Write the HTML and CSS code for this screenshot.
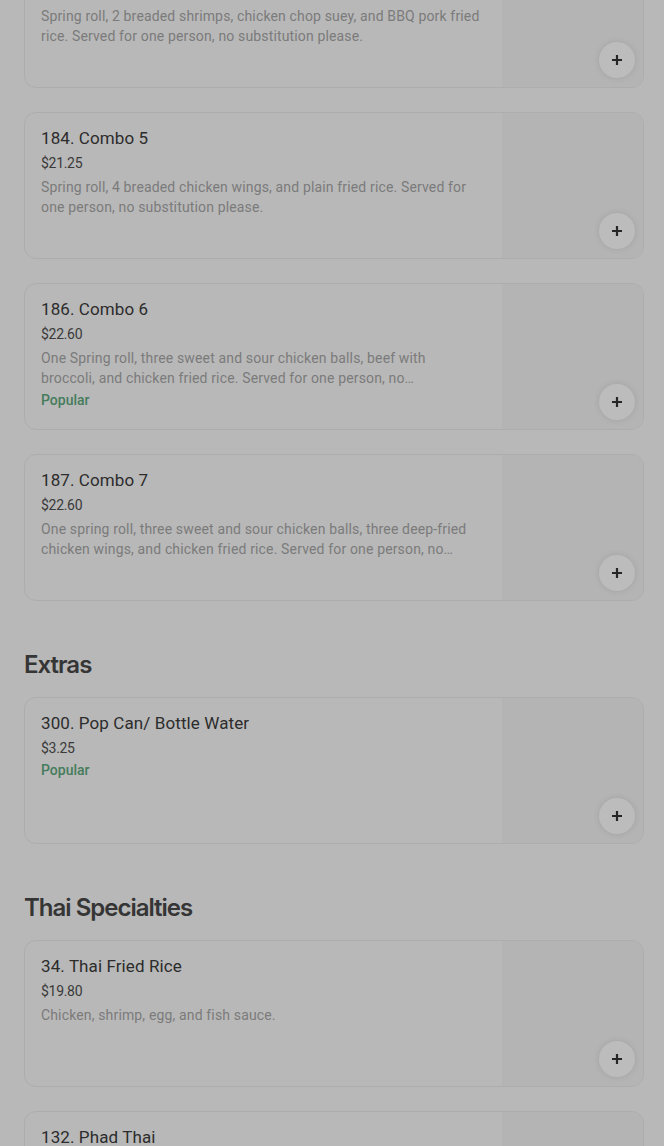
FILE: index.html
```html
<!DOCTYPE html>
<html lang="en">
<head>
  <meta charset="UTF-8" />
  <meta name="viewport" content="width=device-width, initial-scale=1.0"/>
  <title>Menu</title>
  <link rel="stylesheet" href="styles.css">
</head>
<body>

<div class="menu">

  <div class="section">
    <div class="item-list">
      <div class="item">
        <div class="item-info">
          <div class="item-title">182. Combo 4</div>
          <div class="item-price">$21.25</div>
          <div class="item-desc">Spring roll, 2 breaded shrimps, chicken chop suey, and BBQ pork fried rice. Served for one person, no substitution please.</div>
        </div>
        <div class="item-photo"><button class="add-btn"><svg viewBox="0 0 12 12"><path d="M6 1v10M1 6h10"/></svg></button></div>
      </div>

      <div class="item">
        <div class="item-info">
          <div class="item-title">184. Combo 5</div>
          <div class="item-price">$21.25</div>
          <div class="item-desc">Spring roll, 4 breaded chicken wings, and plain fried rice. Served for one person, no substitution please.</div>
        </div>
        <div class="item-photo"><button class="add-btn"><svg viewBox="0 0 12 12"><path d="M6 1v10M1 6h10"/></svg></button></div>
      </div>

      <div class="item">
        <div class="item-info">
          <div class="item-title">186. Combo 6</div>
          <div class="item-price">$22.60</div>
          <div class="item-desc">One Spring roll, three sweet and sour chicken balls, beef with broccoli, and chicken fried rice. Served for one person, no substitution please.</div>
          <div class="item-tag">Popular</div>
        </div>
        <div class="item-photo"><button class="add-btn"><svg viewBox="0 0 12 12"><path d="M6 1v10M1 6h10"/></svg></button></div>
      </div>

      <div class="item">
        <div class="item-info">
          <div class="item-title">187. Combo 7</div>
          <div class="item-price">$22.60</div>
          <div class="item-desc">One spring roll, three sweet and sour chicken balls, three deep-fried chicken wings, and chicken fried rice. Served for one person, no substitution please.</div>
        </div>
        <div class="item-photo"><button class="add-btn"><svg viewBox="0 0 12 12"><path d="M6 1v10M1 6h10"/></svg></button></div>
      </div>
    </div>
  </div>

  <div class="section">
    <h2 class="section-title">Extras</h2>
    <div class="item-list">
      <div class="item">
        <div class="item-info">
          <div class="item-title">300. Pop Can/ Bottle Water</div>
          <div class="item-price">$3.25</div>
          <div class="item-tag">Popular</div>
        </div>
        <div class="item-photo"><button class="add-btn"><svg viewBox="0 0 12 12"><path d="M6 1v10M1 6h10"/></svg></button></div>
      </div>
    </div>
  </div>

  <div class="section">
    <h2 class="section-title">Thai Specialties</h2>
    <div class="item-list">
      <div class="item">
        <div class="item-info">
          <div class="item-title">34. Thai Fried Rice</div>
          <div class="item-price">$19.80</div>
          <div class="item-desc">Chicken, shrimp, egg, and fish sauce.</div>
        </div>
        <div class="item-photo"><button class="add-btn"><svg viewBox="0 0 12 12"><path d="M6 1v10M1 6h10"/></svg></button></div>
      </div>

      <div class="item">
        <div class="item-info">
          <div class="item-title">132. Phad Thai</div>
          <div class="item-price">$19.80</div>
          <div class="item-desc">Rice noodles, chicken, shrimp, egg, bean sprouts and peanuts.</div>
        </div>
        <div class="item-photo"><button class="add-btn"><svg viewBox="0 0 12 12"><path d="M6 1v10M1 6h10"/></svg></button></div>
      </div>
    </div>
  </div>

</div>

</body>
</html>
```

FILE: styles.css
```css
* {
  box-sizing: border-box;
}

body {
  margin: 0;
  background: #b8b8b8;
  font-family: "Roboto", "Inter", sans-serif;
  color: #2e2e2e;
  overflow: hidden;
}

.menu {
  margin-top: -59px;
  padding: 0 20px 0 24px;
}

.section {
  margin-bottom: 39px;
}

.section-title {
  margin: 0 0 9px;
  height: 48px;
  display: flex;
  align-items: center;
  font-family: "Inter", sans-serif;
  font-size: 24px;
  font-weight: 600;
  letter-spacing: -1px;
  color: #353535;
}

.item-list {
  display: flex;
  flex-direction: column;
  gap: 24px;
}

/* Menu item card */
.item {
  display: flex;
  height: 147px;
  border: 1px solid #adadad;
  border-radius: 12px;
  overflow: hidden;
}

.item-info {
  flex: 1;
  padding: 14px 21px 0 16px;
  min-width: 0;
}

.item-title {
  font-size: 17px;
  font-weight: 400;
  line-height: 22px;
  letter-spacing: 0.1px;
  color: #2c2c2c;
}

.item-price {
  margin-top: 4px;
  font-size: 14px;
  line-height: 20px;
  letter-spacing: -0.3px;
  color: #3a3a3a;
}

.item-desc {
  margin-top: 4px;
  font-size: 14px;
  line-height: 20px;
  letter-spacing: 0.15px;
  color: #7b7b7b;
  display: -webkit-box;
  -webkit-line-clamp: 2;
  -webkit-box-orient: vertical;
  overflow: hidden;
}

.item-tag {
  margin-top: 2px;
  font-size: 14px;
  font-weight: 500;
  line-height: 20px;
  color: #457c5c;
}

.item-photo {
  position: relative;
  width: 141px;
  flex-shrink: 0;
  background: #b4b4b4;
}

.add-btn {
  position: absolute;
  right: 8px;
  bottom: 9px;
  width: 36px;
  height: 36px;
  border: none;
  border-radius: 50%;
  background: #bcbcbc;
  box-shadow: 0 0 6px rgba(0, 0, 0, 0.1);
  padding: 0;
  display: flex;
  align-items: center;
  justify-content: center;
}

.add-btn svg {
  width: 12px;
  height: 12px;
  stroke: #262626;
  stroke-width: 2.2;
  fill: none;
}
```
